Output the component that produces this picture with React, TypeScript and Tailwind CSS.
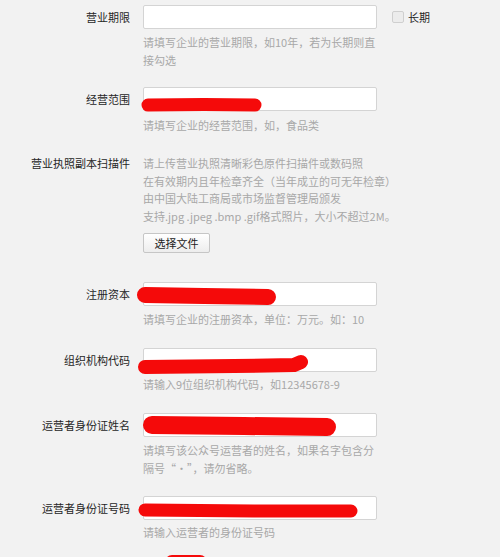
import React from "react";

const font = { fontFamily: '"Noto Sans CJK SC", "Noto Sans", sans-serif' };

function Scribble({ d, w }: { d: string; w: number }) {
  return (
    <svg
      className="pointer-events-none absolute left-0 top-0 overflow-visible"
      width="240"
      height="24"
    >
      <path d={d} stroke="#f50a0a" strokeWidth={w} strokeLinecap="round" strokeLinejoin="round" fill="none" />
    </svg>
  );
}

function Input({ scribble }: { scribble?: React.ReactNode }) {
  return (
    <div className="relative h-[24px] w-[234px] rounded-[2px] border border-[#d4d4d4] bg-white">
      {scribble}
    </div>
  );
}

function Hint({ children, className = "" }: { children: React.ReactNode; className?: string }) {
  return <div className={`text-[11px] leading-[18px] text-[#a8a8a8] ${className}`}>{children}</div>;
}

function Row({
  label,
  mt,
  scribble,
  hint,
  hintMt,
  extra,
}: {
  label: string;
  mt: string;
  scribble?: React.ReactNode;
  hint: React.ReactNode;
  hintMt: string;
  extra?: React.ReactNode;
}) {
  return (
    <div className={`flex ${mt}`}>
      <div className="flex h-[24px] w-[130px] items-center justify-end text-[11px] text-[#262626]">{label}</div>
      <div className="ml-[13px] w-[234px]">
        <Input scribble={scribble} />
        <div className={hintMt}>{hint}</div>
      </div>
      {extra}
    </div>
  );
}

export default function App() {
  return (
    <div className="h-[557px] overflow-hidden bg-[#f2f2f2] pt-[5px]" style={font}>
      <Row
        label="营业期限"
        mt="mt-0"
        hintMt="mt-[4px]"
        hint={<Hint>请填写企业的营业期限，如10年，若为长期则直接勾选</Hint>}
        extra={
          <label className="ml-[15px] flex h-[24px] items-center gap-[4px] text-[11px] text-[#262626]">
            <span className="block h-[12px] w-[12px] rounded-[2px] border border-[#cfcfcf] bg-[#ececec]" />
            长期
          </label>
        }
      />
      <Row
        label="经营范围"
        mt="mt-[18px]"
        hintMt="mt-[5px]"
        scribble={<Scribble d="M 4 17 L 60 16.5 L 111 17" w={13} />}
        hint={<Hint>请填写企业的经营范围，如，食品类</Hint>}
      />

      <div className="mt-[21px] flex">
        <div className="w-[130px] text-right text-[11px] leading-[17.5px] text-[#262626]">营业执照副本扫描件</div>
        <div className="ml-[13px]">
          <div className="text-[11px] leading-[17.5px] text-[#a8a8a8]">
            <div>请上传营业执照清晰彩色原件扫描件或数码照</div>
            <div>在有效期内且年检章齐全（当年成立的可无年检章）</div>
            <div>由中国大陆工商局或市场监督管理局颁发</div>
            <div>支持.jpg .jpeg .bmp .gif格式照片，大小不超过2M。</div>
          </div>
          <button className="mt-[8px] h-[20px] w-[67px] rounded-[2px] border border-[#c6c6c6] bg-gradient-to-b from-white to-[#ededed] text-[11px] text-[#222]">
            选择文件
          </button>
        </div>
      </div>

      <Row
        label="注册资本"
        mt="mt-[29px]"
        hintMt="mt-[4px]"
        scribble={<Scribble d="M 1 12 L 60 13 L 124 14" w={16} />}
        hint={<Hint>请填写企业的注册资本，单位：万元。如：10</Hint>}
      />
      <Row
        label="组织机构代码"
        mt="mt-[20px]"
        hintMt="mt-[3px]"
        scribble={<Scribble d="M 1 18 L 90 17 L 150 16 L 157 13" w={14} />}
        hint={<Hint>请输入9位组织机构代码，如12345678-9</Hint>}
      />
      <Row
        label="运营者身份证姓名"
        mt="mt-[20px]"
        hintMt="mt-[4px]"
        scribble={<Scribble d="M 8 11 L 100 12 L 183 13" w={18} />}
        hint={<Hint>请填写该公众号运营者的姓名，如果名字包含分隔号“·”，请勿省略。</Hint>}
      />
      <Row
        label="运营者身份证号码"
        mt="mt-[19px]"
        hintMt="mt-[3px]"
        scribble={<Scribble d="M 1 13 L 110 14 L 207 14" w={13} />}
        hint={<Hint>请输入运营者的身份证号码</Hint>}
      />
      <Row
        label=""
        mt="mt-[18px]"
        hintMt="mt-[3px]"
        scribble={<Scribble d="M 28 2 L 56 2" w={14} />}
        hint={<Hint>&nbsp;</Hint>}
      />
    </div>
  );
}
